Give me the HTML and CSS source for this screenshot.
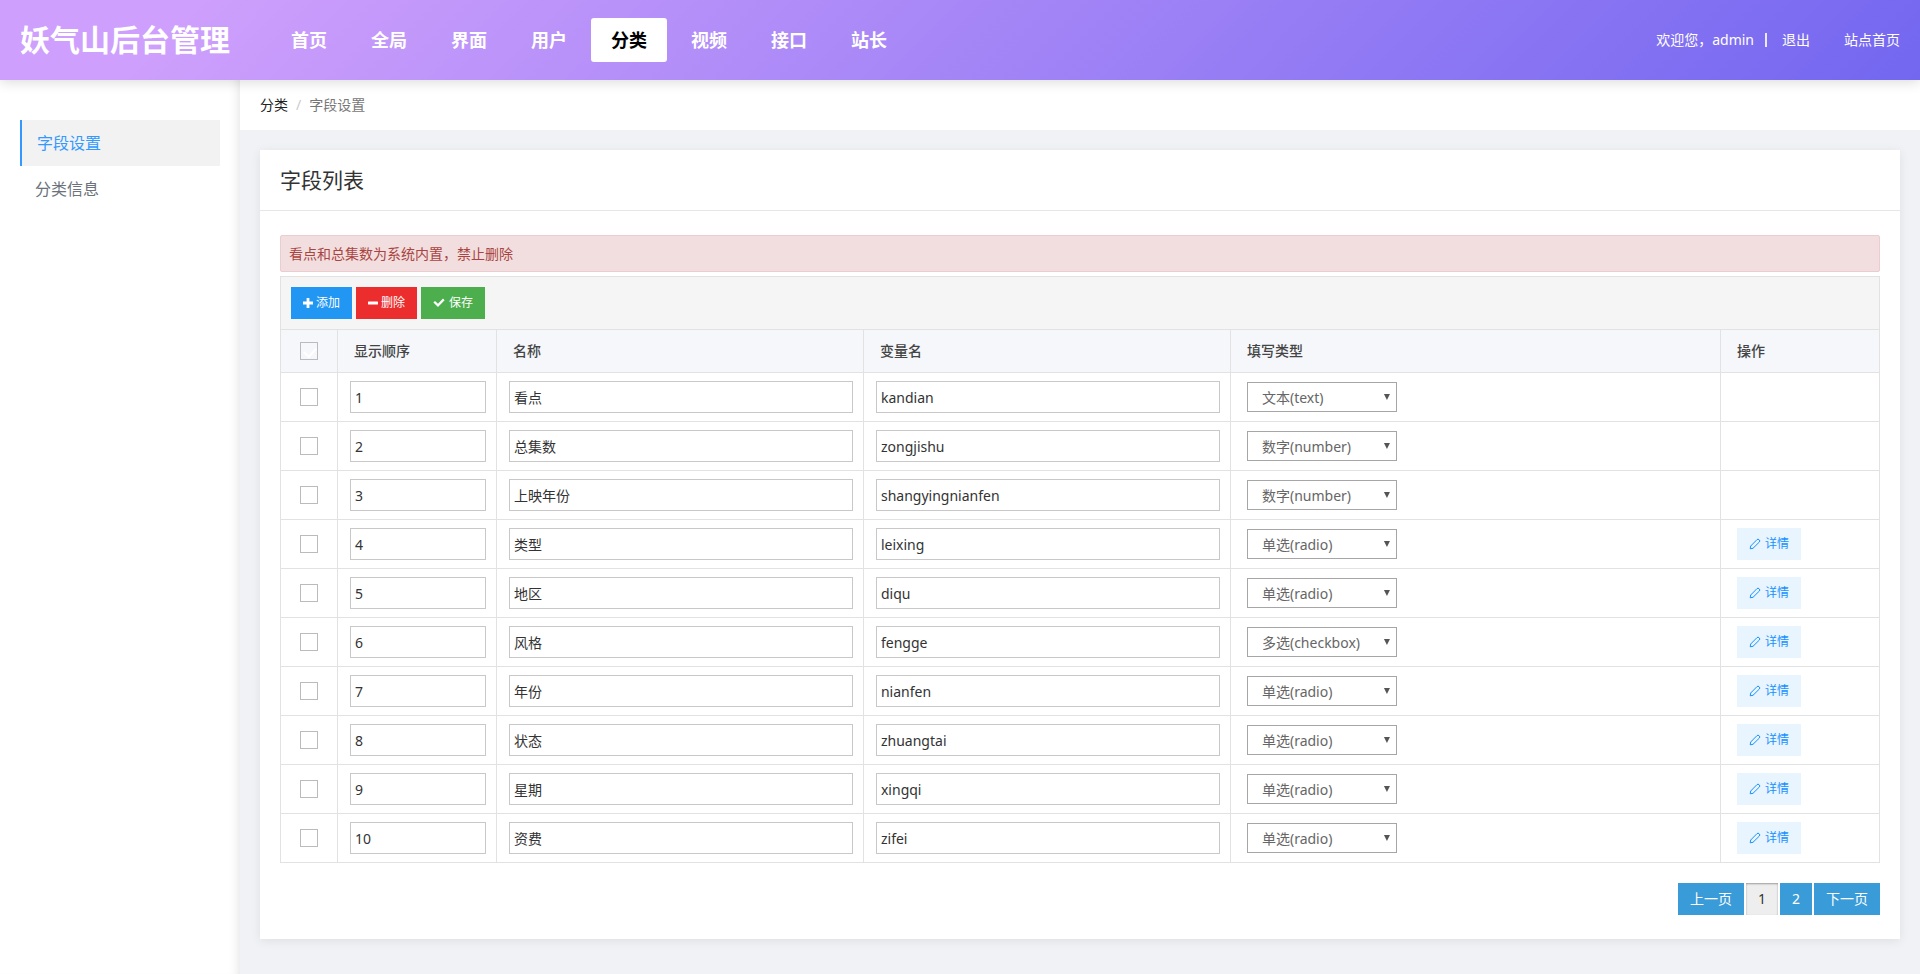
FILE: index.html
```
<!DOCTYPE html>
<html lang="zh-CN">
<head>
<meta charset="utf-8">
<title>妖气山后台管理</title>
<link rel="stylesheet" href="styles.css">
</head>
<body>
<svg class="sprite" aria-hidden="true">
  <symbol id="i-plus" viewBox="0 0 10 10"><path d="M3.6 0h2.8v3.6H10v2.8H6.4V10H3.6V6.4H0V3.6h3.6z"/></symbol>
  <symbol id="i-minus" viewBox="0 0 10 10"><path d="M.5 3.5h9a.5.5 0 0 1 .5.5v2a.5.5 0 0 1-.5.5h-9A.5.5 0 0 1 0 6V4a.5.5 0 0 1 .5-.5z"/></symbol>
  <symbol id="i-check" viewBox="0 0 12 10"><path d="M10 .6 11.6 2.200 5 9 .4 4.600 2 3l3 2.800z"/></symbol>
  <symbol id="i-edit" viewBox="0 0 12 12"><path d="M1.200 10.800 1.700 8 8 1.600q1-.9 2 0l.4.4q.9 1 0 2L4 10.300z" fill="none" stroke="currentColor" stroke-width="1" stroke-linejoin="round"/></symbol>
</svg>
<header class="topbar">
  <h1 class="logo">妖气山后台管理</h1>
  <nav class="nav">
    <a href="#">首页</a><a href="#">全局</a><a href="#">界面</a><a href="#">用户</a><a href="#" class="active">分类</a><a href="#">视频</a><a href="#">接口</a><a href="#">站长</a>
  </nav>
  <div class="user">
    <span>欢迎您，admin</span><span class="bar"></span><a href="#">退出</a><a href="#" class="site">站点首页</a>
  </div>
</header>
<div class="layout">
  <aside class="side">
    <a href="#" class="active">字段设置</a>
    <a href="#">分类信息</a>
  </aside>
  <main class="main">
    <nav class="crumb"><a href="#">分类</a><span class="sep">/</span><span>字段设置</span></nav>
    <section class="card">
      <h2 class="card-title">字段列表</h2>
      <div class="card-body">
        <p class="alert">看点和总集数为系统内置，禁止删除</p>
        <div class="toolbar">
          <button type="button" class="btn blue"><svg class="ico"><use href="#i-plus"/></svg>添加</button>
          <button type="button" class="btn red"><svg class="ico"><use href="#i-minus"/></svg>删除</button>
          <button type="button" class="btn green"><svg class="ico wide"><use href="#i-check"/></svg>保存</button>
        </div>
        <table class="grid">
          <colgroup><col class="c-check"><col class="c-order"><col class="c-name"><col class="c-name"><col><col class="c-order"></colgroup>
          <thead>
            <tr><th class="tick"><input type="checkbox" class="all" aria-label="全选"></th><th>显示顺序</th><th>名称</th><th>变量名</th><th>填写类型</th><th>操作</th></tr>
          </thead>
          <tbody>
            <tr><td class="tick"><input type="checkbox" aria-label="选择 1"></td><td><input class="text" aria-label="显示顺序" value="1"></td><td><input class="text" aria-label="名称" value="看点"></td><td><input class="text" aria-label="变量名" value="kandian"></td><td class="pad"><span class="pick"><select aria-label="填写类型"><option>文本(text)</option></select></span></td><td class="pad"></td></tr>
            <tr><td class="tick"><input type="checkbox" aria-label="选择 2"></td><td><input class="text" aria-label="显示顺序" value="2"></td><td><input class="text" aria-label="名称" value="总集数"></td><td><input class="text" aria-label="变量名" value="zongjishu"></td><td class="pad"><span class="pick"><select aria-label="填写类型"><option>数字(number)</option></select></span></td><td class="pad"></td></tr>
            <tr><td class="tick"><input type="checkbox" aria-label="选择 3"></td><td><input class="text" aria-label="显示顺序" value="3"></td><td><input class="text" aria-label="名称" value="上映年份"></td><td><input class="text" aria-label="变量名" value="shangyingnianfen"></td><td class="pad"><span class="pick"><select aria-label="填写类型"><option>数字(number)</option></select></span></td><td class="pad"></td></tr>
            <tr><td class="tick"><input type="checkbox" aria-label="选择 4"></td><td><input class="text" aria-label="显示顺序" value="4"></td><td><input class="text" aria-label="名称" value="类型"></td><td><input class="text" aria-label="变量名" value="leixing"></td><td class="pad"><span class="pick"><select aria-label="填写类型"><option>单选(radio)</option></select></span></td><td class="pad"><a href="#" class="btn pale"><svg class="ico wide"><use href="#i-edit"/></svg>详情</a></td></tr>
            <tr><td class="tick"><input type="checkbox" aria-label="选择 5"></td><td><input class="text" aria-label="显示顺序" value="5"></td><td><input class="text" aria-label="名称" value="地区"></td><td><input class="text" aria-label="变量名" value="diqu"></td><td class="pad"><span class="pick"><select aria-label="填写类型"><option>单选(radio)</option></select></span></td><td class="pad"><a href="#" class="btn pale"><svg class="ico wide"><use href="#i-edit"/></svg>详情</a></td></tr>
            <tr><td class="tick"><input type="checkbox" aria-label="选择 6"></td><td><input class="text" aria-label="显示顺序" value="6"></td><td><input class="text" aria-label="名称" value="风格"></td><td><input class="text" aria-label="变量名" value="fengge"></td><td class="pad"><span class="pick"><select aria-label="填写类型"><option>多选(checkbox)</option></select></span></td><td class="pad"><a href="#" class="btn pale"><svg class="ico wide"><use href="#i-edit"/></svg>详情</a></td></tr>
            <tr><td class="tick"><input type="checkbox" aria-label="选择 7"></td><td><input class="text" aria-label="显示顺序" value="7"></td><td><input class="text" aria-label="名称" value="年份"></td><td><input class="text" aria-label="变量名" value="nianfen"></td><td class="pad"><span class="pick"><select aria-label="填写类型"><option>单选(radio)</option></select></span></td><td class="pad"><a href="#" class="btn pale"><svg class="ico wide"><use href="#i-edit"/></svg>详情</a></td></tr>
            <tr><td class="tick"><input type="checkbox" aria-label="选择 8"></td><td><input class="text" aria-label="显示顺序" value="8"></td><td><input class="text" aria-label="名称" value="状态"></td><td><input class="text" aria-label="变量名" value="zhuangtai"></td><td class="pad"><span class="pick"><select aria-label="填写类型"><option>单选(radio)</option></select></span></td><td class="pad"><a href="#" class="btn pale"><svg class="ico wide"><use href="#i-edit"/></svg>详情</a></td></tr>
            <tr><td class="tick"><input type="checkbox" aria-label="选择 9"></td><td><input class="text" aria-label="显示顺序" value="9"></td><td><input class="text" aria-label="名称" value="星期"></td><td><input class="text" aria-label="变量名" value="xingqi"></td><td class="pad"><span class="pick"><select aria-label="填写类型"><option>单选(radio)</option></select></span></td><td class="pad"><a href="#" class="btn pale"><svg class="ico wide"><use href="#i-edit"/></svg>详情</a></td></tr>
            <tr><td class="tick"><input type="checkbox" aria-label="选择 10"></td><td><input class="text" aria-label="显示顺序" value="10"></td><td><input class="text" aria-label="名称" value="资费"></td><td><input class="text" aria-label="变量名" value="zifei"></td><td class="pad"><span class="pick"><select aria-label="填写类型"><option>单选(radio)</option></select></span></td><td class="pad"><a href="#" class="btn pale"><svg class="ico wide"><use href="#i-edit"/></svg>详情</a></td></tr>
          </tbody>
        </table>
        <nav class="pages">
          <a href="#">上一页</a><span class="now">1</span><a href="#">2</a><a href="#">下一页</a>
        </nav>
      </div>
    </section>
  </main>
</div>
</body>
</html>
```

FILE: styles.css
```
* { box-sizing: border-box; }
body, input, select, button {
  font-family: "Noto Sans", "Noto Sans CJK SC", sans-serif;
  font-size: 14px;
}
body {
  margin: 0;
  min-height: 100vh;
  display: flex;
  flex-direction: column;
  line-height: 20px;
  color: #333;
  background: #f0f2f5;
}
a { color: inherit; text-decoration: none; }
h1, h2, p { margin: 0; }
.sprite { display: none; }

.topbar {
  position: relative;
  z-index: 2;
  display: flex;
  align-items: center;
  height: 80px;
  padding: 0 20px;
  color: #fff;
  background: linear-gradient(135deg, #ce9ffc 10%, #7367f0 100%);
  box-shadow: 0 2px 12px rgba(0, 0, 0, .15);
}
.logo { width: 251px; font-size: 30px; line-height: 44px; font-weight: 700; white-space: nowrap; }
.nav { display: flex; gap: 4px; }
.nav a {
  padding: 0 20px;
  border-radius: 3px;
  font-size: 18px;
  line-height: 44px;
  font-weight: 700;
}
.nav .active { color: #000; background: #fff; }
.user { display: flex; align-items: center; margin-left: auto; }
.bar { width: 2px; height: 14px; margin: 0 15px 0 11px; background: rgba(255, 255, 255, .85); }
.site { margin-left: 34px; }

.layout { flex: 1; display: flex; }
.side {
  position: relative;
  z-index: 1;
  flex: none;
  width: 240px;
  padding: 40px 20px;
  background: #fff;
  box-shadow: inset -10px 0 12px -10px rgba(0, 0, 0, .14);
  font-size: 16px;
  line-height: 46px;
  color: #6b727c;
}
.side a { display: block; padding-left: 15px; }
.side .active { color: #39f; background: #f2f2f2; border-left: 2px solid #39f; }
.main { flex: 1; min-width: 0; padding-bottom: 20px; }
.crumb {
  display: flex;
  padding: 15px 20px;
  background: #fff;
  color: #777;
}
.crumb a { color: #222; }
.sep { padding: 0 8px; color: #ccc; }

.card { margin: 20px 20px 0; background: #fff; box-shadow: 0 2px 10px rgba(0, 0, 0, .08); }
.card-title {
  padding: 15px 20px;
  border-bottom: 1px solid #e6e6e6;
  font-size: 21px;
  line-height: 30px;
  font-weight: 400;
}
.card-body { padding: 24px 20px; }
.alert {
  margin-bottom: 4px;
  padding: 8px;
  border: 1px solid #ebccd1;
  border-radius: 2px;
  color: #a94442;
  background: #f2dede;
  line-height: 19px;
}
.toolbar {
  display: flex;
  gap: 4px;
  padding: 10px;
  border: solid #e2e2e2;
  border-width: 1px 1px 0;
  background: #f5f5f5;
}
.btn {
  display: inline-flex;
  align-items: center;
  gap: 3px;
  height: 32px;
  padding: 0 12px;
  border: 0;
  font-size: 12px;
  line-height: 32px;
  color: #fff;
  vertical-align: top;
}
.ico { width: 10px; height: 12px; fill: currentColor; }
.wide { width: 12px; }
.blue { background: #2196f3; }
.red { background: #eb2d2e; }
.green { gap: 4px; background: #4cae4c; }
.pale { gap: 4px; color: #1890ff; background: #e8f5fe; }

.grid { width: 100%; table-layout: fixed; border-collapse: collapse; }
.c-check { width: 57px; }
.c-order { width: 159px; }
.c-name { width: 22.95%; }
th, td { border: 1px solid #e2e2e2; text-align: left; }
th { height: 43px; padding: 0 16px; font-weight: 500; color: #444; background: #f5f7fb; }
td { height: 49px; padding: 8px 10px 8px 12px; }
.pad { padding-left: 16px; }
.tick { padding: 0; text-align: center; }
.tick input {
  appearance: none;
  display: block;
  width: 18px;
  height: 18px;
  margin: 0 auto;
  border: 1px solid #bbb;
  background: #fff;
}
.tick .all { padding: 2px 5px; background: transparent; }
.all::before {
  content: "";
  display: block;
  width: 6px;
  height: 10px;
  border: solid #fff;
  border-width: 0 2px 2px 0;
  transform: rotate(42deg);
}
.text {
  display: block;
  width: 100%;
  height: 32px;
  padding: 0 4px;
  border: 1px solid #c8c8c8;
  color: #333;
  background: #fff;
}
.pick { position: relative; display: block; width: 150px; }
.pick::after {
  content: "";
  position: absolute;
  right: 7px;
  top: 12px;
  width: 6px;
  height: 6px;
  background: #555;
  clip-path: polygon(0 0, 100% 0, 50% 100%);
  pointer-events: none;
}
.pick select {
  appearance: none;
  display: block;
  width: 100%;
  height: 30px;
  padding: 0 14px;
  border: 1px solid #a6a6a6;
  border-radius: 0;
  color: #666;
  background: #fff;
}

.pages { display: flex; justify-content: flex-end; gap: 2px; margin-top: 20px; line-height: 32px; }
.pages > * { padding: 0 12px; color: #fff; background: #3a9bd9; }
.pages .now { color: #333; background: #eee; box-shadow: inset 0 1px 2px rgba(0, 0, 0, .35); }
```
